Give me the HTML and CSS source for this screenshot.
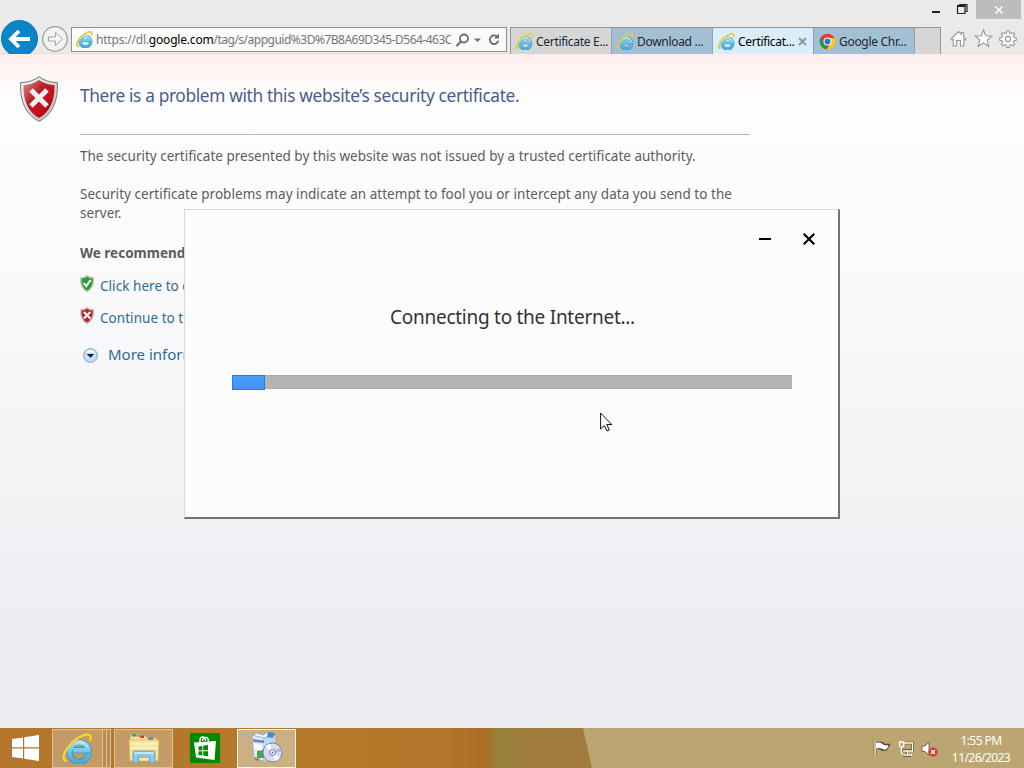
FILE: index.html
```html
<!DOCTYPE html>
<html lang="en">
<head>
    <meta charset="UTF-8">
    <meta name="viewport" content="width=device-width, initial-scale=1.0">
    <title>Certificate Error: Navigation Blocked</title>
    <link rel="stylesheet" href="styles.css">
</head>
<body>
    <!-- shared icons -->
    <svg class="defs" width="0" height="0">
        <defs>
            <linearGradient id="ieBlue" x1="0" y1="0" x2="0" y2="1">
                <stop offset="0" stop-color="#a5e6f8"/>
                <stop offset="0.5" stop-color="#62c8ee"/>
                <stop offset="1" stop-color="#48abda"/>
            </linearGradient>
            <linearGradient id="redShield" x1="0" y1="0" x2="1" y2="1">
                <stop offset="0" stop-color="#e88a8a"/>
                <stop offset="0.4" stop-color="#b3202a"/>
                <stop offset="0.6" stop-color="#c9101c"/>
                <stop offset="1" stop-color="#8f0d16"/>
            </linearGradient>
            <linearGradient id="rim" x1="0" y1="0" x2="1" y2="1">
                <stop offset="0" stop-color="#f6f6f4"/>
                <stop offset="1" stop-color="#b9b9b5"/>
            </linearGradient>
            <symbol id="ie" viewBox="0 0 32 32">
                <path d="M27.500 21.500A10 10 0 1 1 27.500 18H11" fill="none" stroke="#2f7fae" stroke-width="6"/>
                <path d="M27.500 21.500A10 10 0 1 1 27.500 18H11" fill="none" stroke="url(#ieBlue)" stroke-width="4.800"/>
                <path d="M5.500 28.500C-1 30 1 20 9 11.500C17 3 28 -1 29.500 3.500C30 5.500 29 7.500 28.500 8" fill="none" stroke="#d0a41c" stroke-width="2.800"/>
                <path d="M5.500 28.500C-1 30 1 20 9 11.500C17 3 28 -1 29.500 3.500C30 5.500 29 7.500 28.500 8" fill="none" stroke="#f7d744" stroke-width="2.200"/>
            </symbol>
            <symbol id="shield" viewBox="0 0 38 46">
                <path d="M19 .7C24 4.500 30 6.500 37.300 6.500C38.500 25 32 39 19 45.300C6 39 -.5 25 .7 6.500C8 6.500 14 4.500 19 .7Z" fill="url(#rim)" stroke="#777" stroke-width="1"/>
                <path d="M19 4C24 7.300 29 9 34.500 9.200C35 24.500 29.500 36.500 19 42C8.500 36.500 3 24.500 3.500 9.200C9 9 14 7.300 19 4Z"/>
            </symbol>
        </defs>
    </svg>

    <div class="browser">
        <div class="title-bar">
            <svg class="win-btn" width="26" height="19" viewBox="0 0 26 19"><path d="M8 12h8" stroke="#222" stroke-width="2"/></svg>
            <svg class="win-btn" width="26" height="19" viewBox="0 0 26 19"><path d="M7.500 6h7.500v7.500h-7.500zM9.500 5V4.500h7.500V11.500H15.500" fill="none" stroke="#222" stroke-width="1.200"/><path d="M7 6h8.500" stroke="#222" stroke-width="2"/></svg>
            <div class="win-close"><svg width="10" height="10" viewBox="0 0 10 10"><path d="M1.500 1.500L8.500 8.500M8.500 1.500L1.500 8.500" stroke="#fff" stroke-width="1.500"/></svg></div>
        </div>

        <div class="nav-row">
            <svg class="nav-buttons" width="71" height="34" viewBox="0 20 71 34">
                <circle cx="19.500" cy="38.500" r="18" fill="#0c85c6" stroke="#0875b0"/>
                <path d="M30 39H12M19 31L11 39L19 47" fill="none" stroke="#fff" stroke-width="3.800"/>
                <circle cx="55" cy="39" r="12.300" fill="#f1f1f1" stroke="#9c9c9c" stroke-width="1.200"/>
                <path d="M48.500 37h7v-4.500l7 6.500l-7 6.500V41h-7z" fill="#f6f6f6" stroke="#a5a5a5"/>
            </svg>
            <div class="address">
                <svg class="ie-small" width="17" height="17"><use href="#ie"/></svg>
                <div class="url">https://dl.<b>google.com</b><span>/tag/s/appguid%3D%7B8A69D345-D564-463C</span></div>
                <svg width="52" height="20" viewBox="0 0 52 20">
                    <circle cx="10" cy="8.500" r="4" fill="none" stroke="#6b6b6b" stroke-width="1.800"/>
                    <path d="M7.200 11.300L2.500 16" stroke="#6b6b6b" stroke-width="2.200"/>
                    <path d="M20 8.500h7l-3.500 3.500z" fill="#6b6b6b"/>
                    <path d="M43.300 6.800A4.300 4.300 0 1 0 44.300 10.800" fill="none" stroke="#6b6b6b" stroke-width="1.800"/>
                    <path d="M45 3.500V8.500H40z" fill="#6b6b6b"/>
                </svg>
            </div>
            <div class="tabs">
                <div class="tab tab-grey"><svg class="ie-small" width="17" height="17"><use href="#ie"/></svg><span>Certificate E...</span></div>
                <div class="tab"><svg class="ie-small" width="17" height="17"><use href="#ie"/></svg><span>Download ...</span></div>
                <div class="tab tab-active"><svg class="ie-small" width="17" height="17"><use href="#ie"/></svg><span>Certificat...</span>
                    <svg class="tab-close" width="9" height="9" viewBox="0 0 9 9"><path d="M1 1L8 8M8 1L1 8" stroke="#8b979f" stroke-width="1.900"/></svg>
                </div>
                <div class="tab">
                    <svg class="ie-small" width="17" height="17" viewBox="0 0 17 17">
                        <circle cx="8.500" cy="8.500" r="7.800" fill="#e33b2e"/>
                        <path d="M1.700 4.700L5.200 10.500L8.500 12.300L7.700 16.300A7.800 7.800 0 0 1 1.700 4.700Z" fill="#23964a"/>
                        <path d="M8.500 5H15.500A7.800 7.800 0 0 1 7.700 16.300L11.700 10.200Z" fill="#fcc820"/>
                        <circle cx="8.500" cy="8.500" r="4" fill="#fff"/>
                        <circle cx="8.500" cy="8.500" r="3" fill="#2574d4"/>
                    </svg>
                    <span>Google Chr...</span>
                </div>
                <div class="new-tab"></div>
            </div>
            <svg class="tools" width="83" height="34" viewBox="941 20 83 34">
                <g fill="#fff" stroke="#999" stroke-width="1.100">
                    <path d="M951 39L958.500 31.500L961.500 34.300V32.500H963.500V36.500L966 39L965 40.200L963.800 39.200V46H960.500V40.500H956.500V46H953.200V39.200L952 40.200Z"/>
                    <path d="M983.500 30L985.800 35.800L991.800 36.200L987.200 40.200L988.700 46.300L983.500 43L978.300 46.300L979.800 40.200L975.200 36.200L981.200 35.800Z"/>
                    <path d="M1006.900 30.800h2.200l.5 2.200l1.600.6l1.900-1.200l1.600 1.600l-1.200 1.900l.6 1.600l2.200.5v2.200l-2.200.5l-.6 1.600l1.200 1.900l-1.600 1.600l-1.900-1.200l-1.600.6l-.5 2.200h-2.200l-.5-2.200l-1.600-.6l-1.900 1.200l-1.600-1.600l1.200-1.900l-.6-1.600l-2.200-.5v-2.200l2.200-.5l.6-1.600l-1.200-1.900l1.600-1.600l1.900 1.200l1.600-.6z"/>
                    <circle cx="1008" cy="39" r="2.600"/>
                </g>
            </svg>
        </div>
    </div>

    <div class="page">
        <svg class="big-shield" width="38" height="46"><use href="#shield" fill="url(#redShield)"/><path d="M11 14L27 30M27 14L11 30" stroke="#f0f0f0" stroke-width="5"/></svg>
        <div class="content">
            <h1>There is a problem with this website’s security certificate.</h1>
            <p class="issued">The security certificate presented by this website was not issued by a trusted certificate authority.</p>
            <p class="fool">Security certificate problems may indicate an attempt to fool you or intercept any data you send to the<br>server.</p>
            <p class="recommend">We recommend</p>
            <div class="link-row">
                <svg width="14" height="17" viewBox="0 0 38 46"><use href="#shield" width="38" height="46" fill="#2c9a35"/><path d="M10 22L17 30L29 13" fill="none" stroke="#fff" stroke-width="5.500"/></svg>
                <a>Click here to close</a>
            </div>
            <div class="link-row">
                <svg width="14" height="17" viewBox="0 0 38 46"><use href="#shield" width="38" height="46" fill="#c0232c"/><path d="M10.500 13.500L28 31M28 13.500L10.500 31" stroke="#fff" stroke-width="5.500"/></svg>
                <a>Continue to this</a>
            </div>
            <div class="more-row">
                <svg width="15" height="15" viewBox="0 0 15 15"><circle cx="7.500" cy="7.500" r="6.900" fill="#c4def4" stroke="#8aa0b8"/><path d="M3 4.500A5.500 5.500 0 0 1 12 4.500Z" fill="#fff"/><path d="M3.800 6h7.400L7.500 9.800z" fill="#0a2040"/></svg>
                <a>More information</a>
            </div>
        </div>
    </div>

    <div class="taskbar">
        <div class="start">
            <svg width="28" height="26" viewBox="0 0 28 26"><path d="M0 4L11 2.400V12.300H0ZM12.200 2.200L27 0V12.300H12.200ZM0 13.500H11V23.500L0 21.900ZM12.200 13.500H27V26L12.200 23.700Z" fill="#fff"/></svg>
        </div>
        <div class="task task-ie"><svg width="31" height="31"><use href="#ie"/></svg></div>
        <div class="stack"></div>
        <div class="stack"></div>
        <div class="task task-files">
            <svg width="32" height="30" viewBox="0 0 32 30">
                <path d="M2 4L3 1.500H8L9 3.500H12V2.500H17L18 4.500H22L23 5H29V10H2Z" fill="#f2e2a0" stroke="#c9a850" stroke-width=".7"/>
                <path d="M4 1h4v2.500h-4z" fill="#3ba34a"/><path d="M12 2.500h4v2.500h-4z" fill="#d8432f"/><path d="M20 4.500h5v2.500h-5z" fill="#3a93c8"/>
                <path d="M1 7H31L30 28H2Z" fill="#f8e59a" stroke="#d4b65e" stroke-width=".7"/>
                <path d="M2 11H30M2 15H30" stroke="#fff3c4" stroke-width="1.500"/>
                <path d="M5 30V19.500Q5 18 6.500 18H25.500Q27 18 27 19.500V30H21.500V24H10.500V30Z" fill="#8ccbe9" stroke="#4a94c0" stroke-width=".8"/>
                <path d="M6.500 20H25.500" stroke="#d5f0fc" stroke-width="1.500"/>
            </svg>
        </div>
        <div class="store">
            <svg width="30" height="30" viewBox="0 0 30 30">
                <path d="M0 0H30V30H0Z" fill="#008a00"/>
                <path d="M10 9V7Q10 4 13 4Q15.500 4 15.500 8M12.500 8Q13 4.500 16 4.500Q18.500 4.500 18.500 9" fill="none" stroke="#fff" stroke-width="1.400"/>
                <path d="M4 9.500L26 8L24.500 27L6 24.500Z" fill="#fff"/>
                <path d="M8.500 13.500L12.300 13V17.300H8.500ZM13.200 12.800L18 12V17.300H13.200ZM8.500 18.200H12.300V22.400L8.500 21.900ZM13.200 18.200H18V23.200L13.200 22.500Z" fill="#008a00"/>
            </svg>
        </div>
        <div class="task task-active">
            <svg width="32" height="32" viewBox="0 0 32 32">
                <path d="M1 3L13 5V29L3 27Z" fill="#dcecf7" stroke="#8baabf" stroke-width=".7"/>
                <path d="M13 5L24 3V25L13 29Z" fill="#b9d9ee"/>
                <path d="M1 3L6 1L12 3L17 0L24 3L13 6Z" fill="#eef6fb" stroke="#7c9fc0" stroke-width=".7"/>
                <path d="M17 0L24 1L22 6L16 5Z" fill="#3d8ec7"/>
                <path d="M2 7L13 8.500V11L2.500 10Z" fill="#6f7fc4"/><path d="M3 12L11 13V18L3 17Z" fill="#fff"/>
                <path d="M6 19L13 18V26H6Z" fill="#41a84c"/><path d="M4 25L9 27L7 29L3 27Z" fill="#d56a5b"/>
                <circle cx="21.500" cy="20.500" r="9.500" fill="#d8daf6" stroke="#7184a8"/>
                <path d="M21.500 20.500L14.500 14.500A9 9 0 0 1 19 11.800ZM21.500 20.500L29 26A9 9 0 0 1 24 29.200Z" fill="#fff"/>
                <path d="M21.500 20.500L29 15.500A9 9 0 0 1 30.500 20Z" fill="#b5b4ee"/>
                <circle cx="21.500" cy="20.500" r="3" fill="#f5f7ff" stroke="#5f75ad"/><circle cx="21.500" cy="20.500" r="1" fill="#657"/>
            </svg>
        </div>
        <div class="tray">
            <svg width="66" height="20" viewBox="872 738 66 20">
                <g fill="none" stroke="#55452a" stroke-width="2.600"><path d="M875 741V756M877 743H882L884 745H888.500L886 749.500H882L880 748H877"/><path d="M905 743H912.500V750.500H901M907 751V755M903 755.500H911"/></g>
                <path d="M875 741V756" stroke="#fff" stroke-width="1.300"/>
                <path d="M876 743Q879.500 742 882 743.500L884 745Q886 745.500 888.500 745Q888 748 886 749.500Q884 750 881.500 748.500Q879 747.500 876 748.500Z" fill="#fff"/>
                <g fill="none" stroke="#fff" stroke-width="1.300"><path d="M904 743H912.500V751H903M907.500 751V754.500M903 755H912"/><path d="M899.500 742H903.500V746Q901.500 748 899.500 746ZM901.500 747V754.500"/></g>
                <path d="M922 746H925L929 742V755L925 751.500H922Z" fill="#fff" stroke="#6a5a38" stroke-width=".9"/>
                <circle cx="933" cy="752" r="4.600" fill="#cf3a33"/>
                <path d="M931 750L935 754M935 750L931 754" stroke="#fff" stroke-width="1.400"/>
            </svg>
            <div class="clock"><span class="time">1:55 PM</span><span class="date">11/26/2023</span></div>
        </div>
    </div>

    <!-- installer window -->
    <div class="installer">
        <div class="installer-controls">
            <svg width="12" height="12" viewBox="0 0 12 12"><path d="M0 6H12" stroke="#000" stroke-width="2"/></svg>
            <svg width="12" height="12" viewBox="0 0 12 12"><path d="M.7 .7L11.300 11.300M11.300 .7L.7 11.300" stroke="#000" stroke-width="2.100"/></svg>
        </div>
        <div class="installer-text"><span>Connecting to the Internet...</span></div>
        <div class="progress"><div class="progress-bar"></div></div>
    </div>

    <svg class="cursor" width="13" height="20" viewBox="0 0 13 20"><path d="M.6 1V17L4.400 13.500L7 19L9.300 18L6.800 12.500H11.800Z" fill="#fff" stroke="#111" stroke-width="1"/></svg>
</body>
</html>
```
FILE: styles.css
```css
* {
    box-sizing: border-box;
}

body {
    margin: 0;
    width: 1024px;
    height: 768px;
    overflow: hidden;
    display: flex;
    flex-direction: column;
    position: relative;
    font-family: "Noto Sans", "Open Sans", sans-serif;
    color: #5c5c5c;
}

svg {
    display: block;
    flex: none;
}

.defs {
    position: absolute;
}

.browser {
    height: 54px;
    background: #eaeaea;
    border-bottom: 1px solid #e2dfdf;
}

.title-bar {
    height: 20px;
    display: flex;
    justify-content: flex-end;
    padding-right: 3px;
}

.win-close {
    width: 45px;
    height: 19px;
    background: #bcbcbc;
    display: flex;
    align-items: center;
    justify-content: center;
}

.nav-row {
    height: 34px;
    display: flex;
}

.address {
    width: 436px;
    height: 25px;
    margin-top: 7px;
    padding-left: 4px;
    display: flex;
    align-items: center;
    background: #fafafa;
    border: 1px solid #8f8f8f;
}

.url {
    width: 356px;
    margin-left: 3px;
    margin-right: 3px;
    overflow: hidden;
    white-space: nowrap;
    font-size: 12px;
    letter-spacing: -0.2px;
    color: #777;
}

.url b {
    font-weight: normal;
    color: #000;
}

.url span {
    letter-spacing: -0.5px;
}

.tabs {
    display: flex;
    width: 431px;
    height: 27px;
    margin-top: 7px;
    margin-left: 3px;
    border: 1px solid #949494;
    border-bottom: 0;
}

.tab {
    width: 101px;
    display: flex;
    align-items: center;
    padding-left: 5px;
    background: #a3bfd4;
    border-right: 1px solid #8fa3b2;
    font-size: 12px;
    color: #1a2733;
    white-space: nowrap;
}

.tab span {
    margin-left: 3px;
    letter-spacing: -0.3px;
}

.tab-grey {
    background: #d6d6d6;
}

.tab-active {
    background: #dcedfa;
    color: #000;
}

.tab-close {
    margin-left: 3px;
}

.new-tab {
    flex: 1;
    background: #d6d6d6;
}

.page {
    height: 674px;
    display: flex;
    padding: 22px 0 0 20px;
    background: linear-gradient(#ffedee 0, #fffafa 25px, #fdfdfd 50px, #fbfbfc 200px, #ecedf1 600px, #ecedf0 674px);
}

.content {
    margin-left: 22px;
}

h1 {
    width: 670px;
    height: 59px;
    margin: 0;
    padding-top: 7px;
    border-bottom: 1px solid #b9b9b9;
    font-size: 17.3px;
    font-weight: normal;
    line-height: 25px;
    letter-spacing: -0.35px;
    color: #4a5c8c;
    white-space: nowrap;
}

p {
    margin: 0;
    font-size: 13.5px;
    line-height: 19px;
    white-space: nowrap;
}

.issued {
    margin-top: 12px;
}

.fool {
    margin-top: 19px;
    letter-spacing: 0.04px;
}

.recommend {
    margin-top: 21px;
    font-weight: bold;
}

.link-row {
    display: flex;
    height: 32px;
    padding-top: 12px;
    font-size: 13.5px;
    line-height: 22px;
    color: #2c6c92;
}

.link-row a {
    margin-left: 6px;
    letter-spacing: 0.05px;
}

.more-row {
    display: flex;
    align-items: center;
    height: 24px;
    margin-top: 16px;
    padding-left: 3px;
    font-size: 15px;
    line-height: 20px;
    color: #2c6c92;
}

.more-row a {
    margin-left: 10px;
    margin-bottom: 3px;
}

.taskbar {
    height: 40px;
    display: flex;
    align-items: center;
    background:
        linear-gradient(77.3deg, transparent 577px, #bba672 578px),
        linear-gradient(90deg, #b3762c 0, #b57a2a 300px, #b3772b 440px, #ad6c26 486px, #97803a 496px, #a27c3e 550px, #9c7c3c 100%);
}

.start {
    width: 52px;
    padding-left: 12px;
}

.task {
    height: 39px;
    display: flex;
    align-items: center;
    justify-content: center;
    background: #c29c64;
    border: 1px solid #dcc29b;
}

.task-ie {
    width: 51px;
}

.stack {
    width: 4px;
    height: 39px;
    background: #bd8b4b;
    border: 1px solid #dcc29b;
    border-left: 0;
}

.task-files {
    width: 59px;
    margin-left: 3px;
}

.store {
    width: 64px;
    padding-left: 17px;
}

.task-active {
    width: 59px;
    background: #cbb084;
    border-color: #fbf5e8;
}

.tray {
    margin-left: auto;
    display: flex;
    align-items: center;
    padding-right: 12px;
}

.clock {
    width: 62px;
    margin-left: 12px;
    display: flex;
    flex-direction: column;
    align-items: center;
    font-size: 12px;
    line-height: 17px;
    padding-top: 2px;
    color: #fff;
    white-space: nowrap;
}

.time,
.date {
    letter-spacing: -0.55px;
}

.installer {
    position: absolute;
    left: 184px;
    top: 209px;
    width: 656px;
    height: 310px;
    padding-top: 23px;
    background: #fcfcfc;
    border: 1px solid #d9dcde;
    border-right: 2px solid #717173;
    border-bottom: 2px solid #717173;
}

.installer-controls {
    display: flex;
    justify-content: flex-end;
    gap: 32px;
    height: 12px;
    padding-right: 23px;
}

.installer-text {
    margin-top: 57px;
    height: 30px;
    padding-left: 2px;
    text-align: center;
    font-size: 19px;
    line-height: 30px;
    letter-spacing: -0.27px;
    color: #333;
    white-space: nowrap;
}

.progress {
    width: 560px;
    height: 14px;
    margin: 43px 0 0 47px;
    background: #b4b4b4;
    border: 1px solid #aaa;
    border-width: 1px 0;
}

.progress-bar {
    width: 33px;
    height: 15px;
    margin-top: -1px;
    background: linear-gradient(#45a0ff, #4a90f8);
    border: 1px solid #2b7ad6;
}

.cursor {
    position: absolute;
    left: 600px;
    top: 412px;
}
```
